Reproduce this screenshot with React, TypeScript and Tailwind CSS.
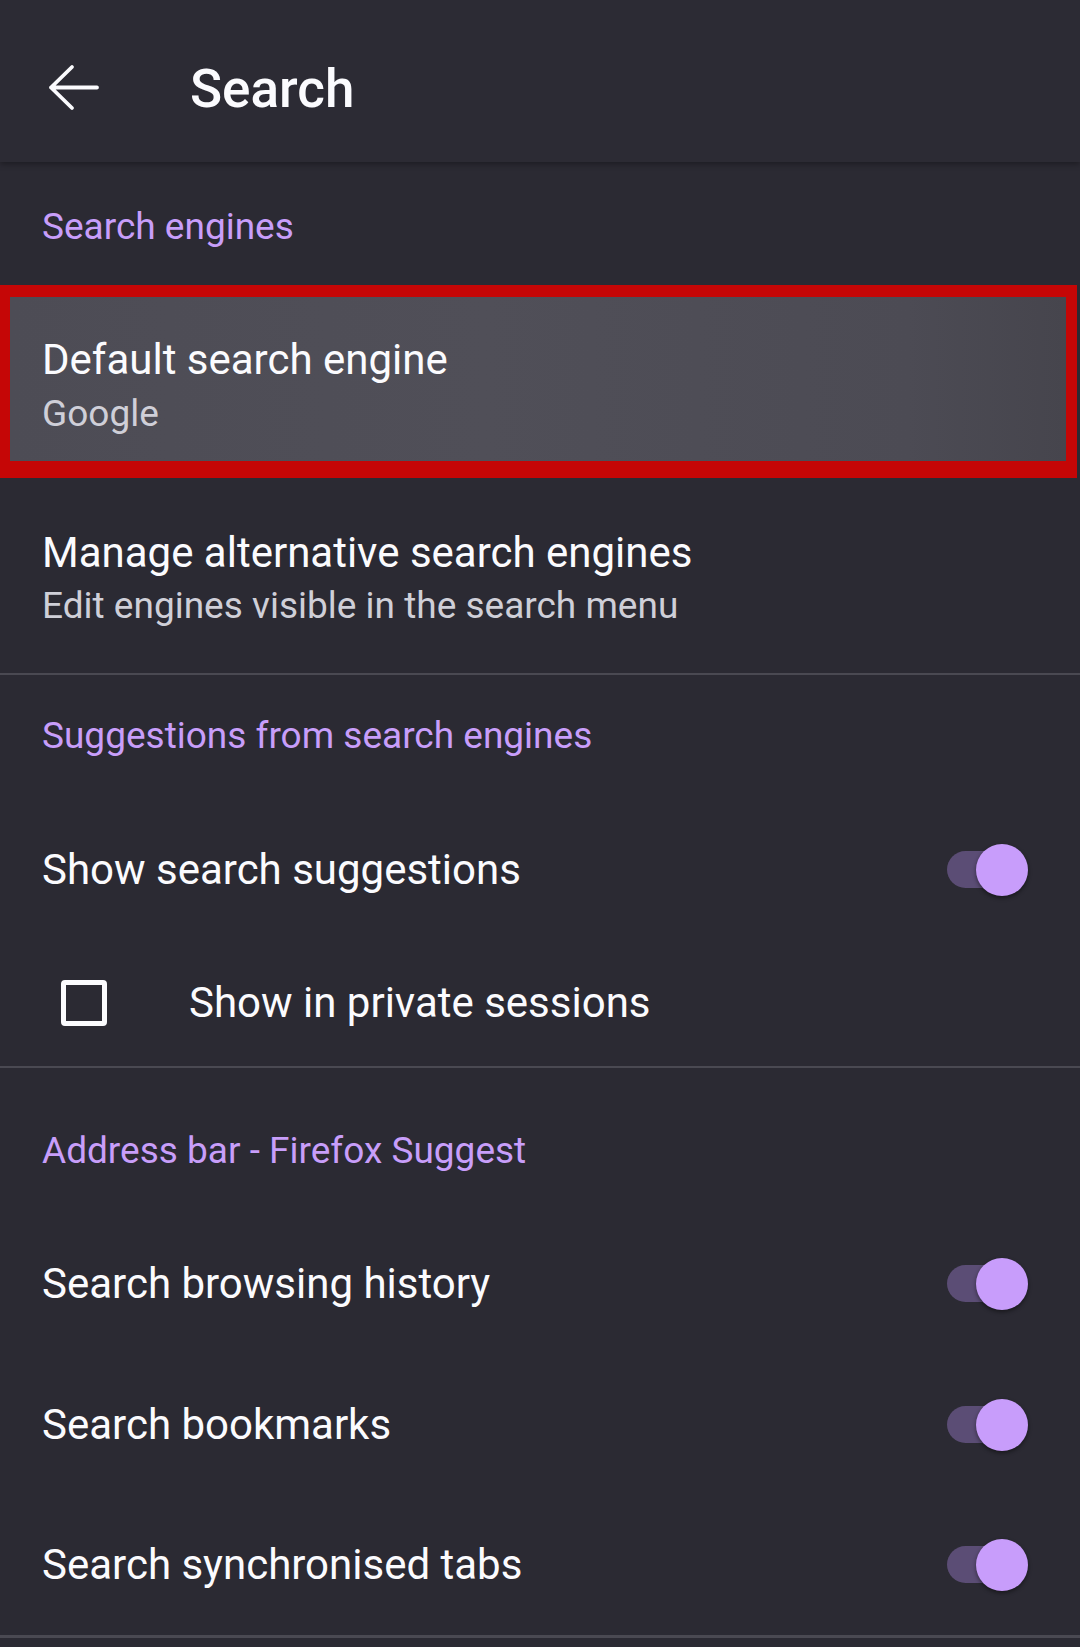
import React from "react";

const font = { fontFamily: "Roboto, 'Noto Sans', sans-serif" };

function Toggle() {
  return (
    <div className="relative w-[81px] h-[52px] mr-[52px] shrink-0">
      <div className="absolute left-0 top-[7px] w-[73px] h-[37px] rounded-full bg-[#5b4d75]" />
      <div className="absolute right-0 top-0 w-[52px] h-[52px] rounded-full bg-[#c89dfb] shadow-[0_2px_4px_rgba(0,0,0,0.45)]" />
    </div>
  );
}

function ToggleRow({ label, h }: { label: string; h: string }) {
  return (
    <div className={`flex items-center justify-between ${h}`}>
      <span className="pl-[42px] text-[42px] leading-[50px] text-[#fbfbfe]">{label}</span>
      <Toggle />
    </div>
  );
}

function Category({ label, cls }: { label: string; cls: string }) {
  return (
    <div className={cls}>
      <div className="pl-[42px] text-[37px] leading-[44px] text-[#c89efa]">{label}</div>
    </div>
  );
}

export default function App() {
  return (
    <div className="w-[1080px] h-[1647px] bg-[#2b2a33] overflow-hidden" style={font}>
      {/* Header */}
      <div className="relative z-10 flex items-center h-[162px] pt-[18px] bg-[#2c2b34] shadow-[0_2px_6px_rgba(0,0,0,0.35)]">
        <svg className="ml-[47px] mt-[-4px]" width="54" height="48" viewBox="0 0 54 48" fill="none">
          <path d="M4 23.5H50M4 23.5L25 3M4 23.5L25 44" stroke="#fbfbfe" strokeWidth="3.8" strokeLinecap="round" strokeLinejoin="round" />
        </svg>
        <span className="ml-[89px] mt-[-2px] text-[53px] leading-[60px] font-medium text-[#fbfbfe]">Search</span>
      </div>

      <Category label="Search engines" cls="h-[123px] pt-[43px]" />

      {/* Highlighted item */}
      <div className="h-[193px] w-[1077px] border-t-[12px] border-l-[10px] border-r-[11px] border-b-[17px] border-[#c50606]">
        <div className="h-full bg-[linear-gradient(90deg,#4d4c55_0%,#504f58_45%,#4c4b54_85%,#46454d_100%)] pt-[38px] pl-[32px]">
          <div className="text-[42px] leading-[50px] text-[#fbfbfe]">Default search engine</div>
          <div className="mt-[7px] text-[37px] leading-[44px] text-[#cfcfd8]">Google</div>
        </div>
      </div>

      {/* Manage */}
      <div className="h-[195px] pt-[50px] pl-[42px]">
        <div className="text-[42px] leading-[50px] text-[#fbfbfe]">Manage alternative search engines</div>
        <div className="mt-[6px] text-[37px] leading-[44px] text-[#cfcfd8]">Edit engines visible in the search menu</div>
      </div>

      <div className="h-[2px] bg-[#4a4952]" />

      <Category label="Suggestions from search engines" cls="h-[125px] pt-[39px]" />

      <ToggleRow label="Show search suggestions" h="h-[140px]" />

      <div className="flex items-center h-[126px]">
        <div className="ml-[61px] w-[46px] h-[46px] rounded-[4px] border-[5px] border-[#fbfbfe]" />
        <span className="ml-[82px] text-[42px] leading-[50px] text-[#fbfbfe]">Show in private sessions</span>
      </div>

      <div className="h-[2px] bg-[#4a4952]" />

      <Category label="Address bar - Firefox Suggest" cls="h-[146px] pt-[61px]" />

      <ToggleRow label="Search browsing history" h="h-[140px]" />
      <ToggleRow label="Search bookmarks" h="h-[141px]" />
      <ToggleRow label="Search synchronised tabs" h="h-[140px]" />

      <div className="h-[3px] bg-[#4a4952]" />
    </div>
  );
}
